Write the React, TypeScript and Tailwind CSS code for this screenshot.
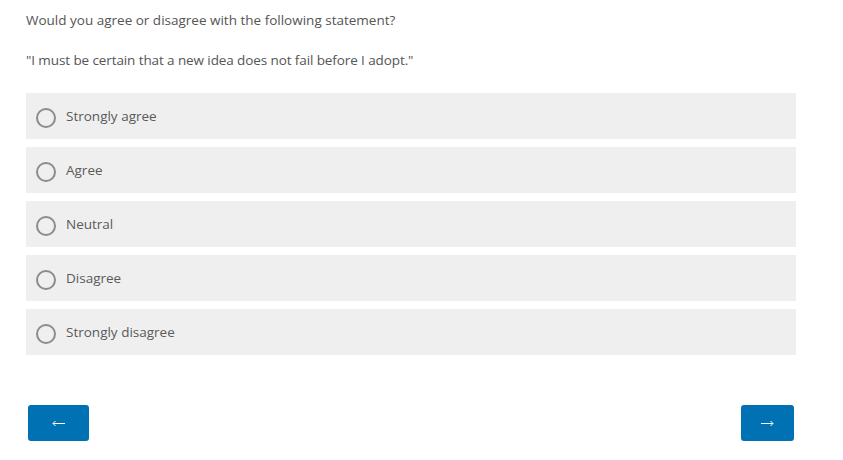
import { useState } from "react";

const options = [
  "Strongly agree",
  "Agree",
  "Neutral",
  "Disagree",
  "Strongly disagree",
];

const Arrow = ({ left }: { left?: boolean }) => (
  <svg
    width="13"
    height="7"
    viewBox="0 0 13 7"
    fill="none"
    stroke="white"
    strokeWidth="1"
    className={left ? "" : "rotate-180"}
  >
    <path d="M1 3.5h12M3.5 1L1 3.5 3.5 6" />
  </svg>
);

export default function App() {
  const [selected, setSelected] = useState<number | null>(null);

  return (
    <div className="w-[843px] h-[460px] bg-white pl-[26px] pt-[11px] font-['Open_Sans',sans-serif] text-[#555]">
      <div className="w-[770px]">
        <p className="text-[13.5px] leading-[18px]">
          Would you agree or disagree with the following statement?
        </p>
        <p className="mt-[22px] text-[13.5px] leading-[18px] tracking-[-0.1px]">
          "I must be certain that a new idea does not fail before I adopt."
        </p>

        <div className="mt-[24px] flex flex-col gap-2">
          {options.map((label, i) => (
            <button
              key={label}
              type="button"
              onClick={() => setSelected(i)}
              className="h-[46px] w-full bg-[#efefef] flex items-center pl-[10px] gap-[10px] text-left"
            >
              <span className="mt-[4px] w-[20px] h-[20px] rounded-full border-2 border-[#8c8c8c] flex items-center justify-center">
                {selected === i && (
                  <span className="w-[10px] h-[10px] rounded-full bg-[#0071b3]" />
                )}
              </span>
              <span className="text-[13.5px] leading-[18px] text-[#5a5a5a]">{label}</span>
            </button>
          ))}
        </div>

        <div className="mt-[50px] flex justify-between items-start">
          <button
            type="button"
            aria-label="Previous"
            className="ml-[2px] w-[61px] h-[36px] rounded-[3px] bg-[#0071b3] flex items-center justify-center"
          >
            <Arrow left />
          </button>
          <button
            type="button"
            aria-label="Next"
            className="mr-[2px] w-[53px] h-[36px] rounded-[3px] bg-[#0071b3] flex items-center justify-center"
          >
            <Arrow />
          </button>
        </div>
      </div>
    </div>
  );
}
